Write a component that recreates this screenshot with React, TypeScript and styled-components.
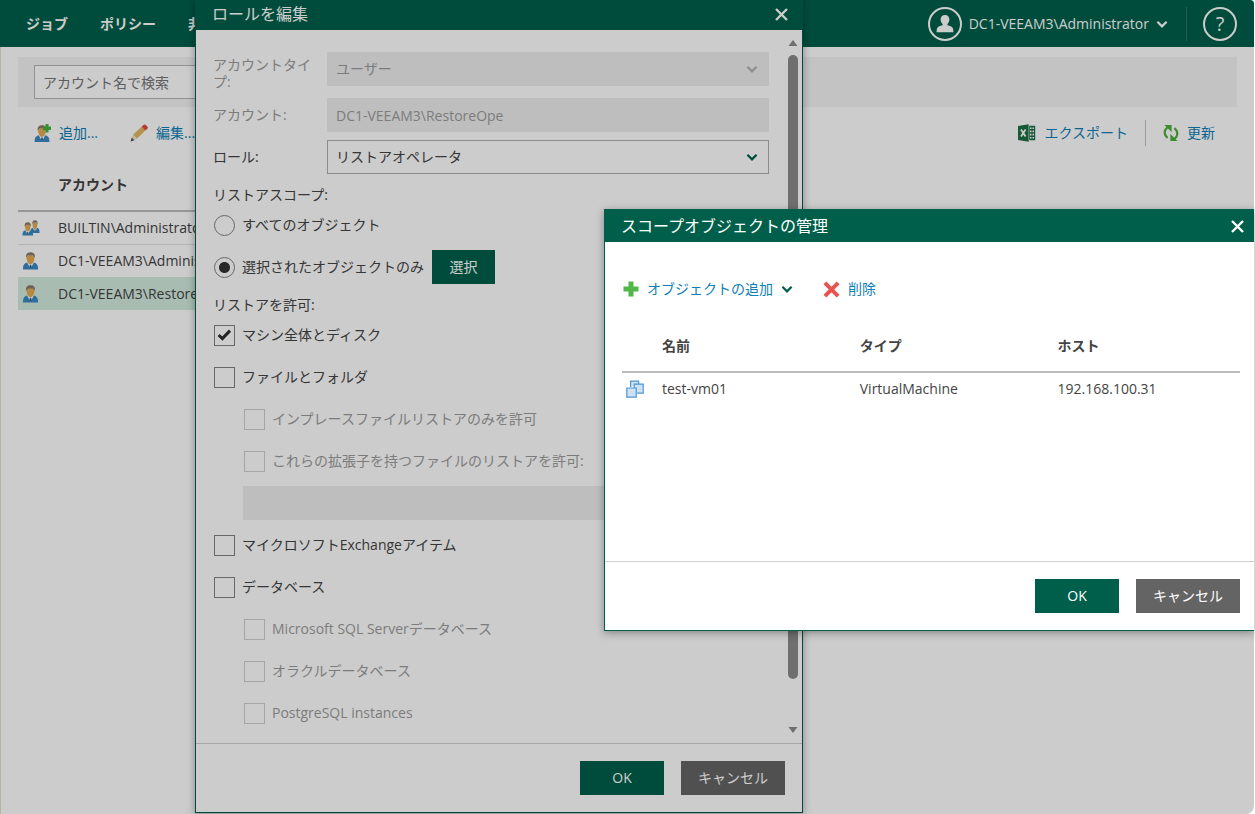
import React, { useState } from "react";
import styled, { createGlobalStyle, css } from "styled-components";

const fontStack = `"Open Sans", "Noto Sans CJK JP", sans-serif`;
const brand = "#005f4b";
const link = "#0f7fb5";
const ink = "#444444";
const faded = "#9c9c9c";

const GlobalStyle = createGlobalStyle`
  * { box-sizing: border-box; }
  html, body, #root { height: 100%; }
  body { margin: 0; background: #fff; overflow: hidden; }
  body, button, input, select, table { font-family: ${fontStack}; font-size: 14px; line-height: 20px; color: ${ink}; }
  button { border: 0; background: none; padding: 0; cursor: pointer; white-space: nowrap; }
  svg { display: block; flex: none; }
`;

/* ---------- page ---------- */

const Screen = styled.div`
  position: relative;
  height: 100%;
  min-height: 814px;
  overflow: hidden;
`;

const Page = styled.div`
  height: 100%;
  margin-right: 1px;
  border-radius: 0 4px 8px 0;
  overflow: hidden;
  background: #fff;
`;

const TopBar = styled.header`
  display: flex;
  align-items: center;
  justify-content: space-between;
  height: 47px;
  padding: 0 17px 0 26px;
  background: ${brand};
`;

const Nav = styled.nav`
  display: flex;
  gap: 32px;
`;

const NavLink = styled.a`
  color: #fff;
  font-weight: 700;
  line-height: 18px;
  text-decoration: none;
  white-space: nowrap;
`;

const Account = styled.div`
  display: flex;
  align-items: center;
`;

const AccountButton = styled.button`
  display: flex;
  align-items: center;
  gap: 7px;
  color: #fff;
`;

const RoundIcon = styled.span`
  display: flex;
  align-items: center;
  justify-content: center;
  width: 34px;
  height: 34px;
  border: 2px solid #fff;
  border-radius: 50%;
`;

const HelpButton = styled.button`
  width: 34px;
  height: 34px;
  margin-left: 16px;
  border: 2px solid #fff;
  border-radius: 50%;
  color: #fff;
  font-size: 20px;
`;

const BarRule = styled.span`
  width: 1px;
  height: 34px;
  margin-left: 18px;
  background: #2b7967;
`;

const Main = styled.main`
  height: 100%;
  padding: 10px 17px 0;
  border-left: 1px solid #e8e0cc;
`;

const SearchBand = styled.div`
  display: flex;
  padding: 8px 16px;
  background: #f4f4f4;
`;

const SearchInput = styled.input`
  width: 280px;
  height: 34px;
  padding: 0 8px;
  border: 1px solid #b8b8b8;
  background: #fff;
  &::placeholder { color: #757575; opacity: 1; }
`;

const Toolbar = styled.div`
  display: flex;
  align-items: center;
  justify-content: space-between;
  height: 51px;
  padding: 0 22px 0 16px;
`;

const ToolGroup = styled.div<{ $gap: number }>`
  display: flex;
  align-items: center;
  gap: ${(p) => p.$gap}px;
`;

const ToolButton = styled.button`
  display: flex;
  align-items: center;
  gap: 8px;
  color: ${link};
`;

const ToolRule = styled.span`
  width: 1px;
  height: 26px;
  background: #c4c4c4;
`;

const Grid = styled.table`
  width: 100%;
  border-collapse: collapse;
  table-layout: fixed;
`;

const HeadCell = styled.th<{ $width?: string }>`
  width: ${(p) => p.$width ?? "auto"};
  height: 53px;
  padding: 2px 0 0;
  border-bottom: 2px solid #bdbdbd;
  font-weight: 700;
  text-align: left;
`;

const BodyRow = styled.tr<{ $selected?: boolean; $line?: boolean }>`
  background: ${(p) => (p.$selected ? "#d3ebdf" : "transparent")};
  border-bottom: ${(p) => (p.$line ? "1px solid #e2e2e2" : "0")};
`;

const Cell = styled.td`
  height: 33px;
  padding: 0;
  white-space: nowrap;
`;

const IconCell = styled(Cell)`
  padding-left: 4px;
`;

/* ---------- dialogs ---------- */

const Shade = styled.div`
  position: absolute;
  inset: 0 1px 0 0;
  border-radius: 0 4px 8px 0;
  background: rgba(0, 0, 0, 0.2);
`;

const Dialog = styled.section`
  position: absolute;
  display: flex;
  flex-direction: column;
  border: 1px solid ${brand};
  background: #fff;
  box-shadow: 0 2px 8px rgba(0, 0, 0, 0.35);
`;

const RoleDialog = styled(Dialog)`
  top: -3px;
  left: 195px;
  width: 608px;
`;

const ScopeDialog = styled(Dialog)`
  top: 209px;
  left: 604px;
  right: 1px;
  border-right: 0;
`;

const DialogHead = styled.header<{ $endPad: number }>`
  display: flex;
  align-items: center;
  justify-content: space-between;
  height: 32px;
  padding: 0 ${(p) => p.$endPad}px 0 16px;
  background: ${brand};
`;

const DialogTitle = styled.h2`
  margin: 0;
  color: #fff;
  font-size: 16px;
  font-weight: 400;
  line-height: 24px;
`;

const DialogFoot = styled.footer<{ $endPad: number }>`
  display: flex;
  justify-content: flex-end;
  gap: 17px;
  padding: 17px ${(p) => p.$endPad}px 17px 17px;
  border-top: 1px solid #cfcfcf;
`;

const ActionButton = styled.button<{ $tone?: "grey"; $width: number }>`
  width: ${(p) => p.$width}px;
  height: 34px;
  background: ${(p) => (p.$tone === "grey" ? "#646464" : brand)};
  color: #fff;
`;

const ScrollArea = styled.div`
  display: flex;
  justify-content: space-between;
`;

const Form = styled.form`
  display: flex;
  flex-direction: column;
  flex: 1;
  gap: 8px;
  padding: 22px 15px 13px 17px;
`;

const FieldSet = styled.div`
  display: grid;
  grid-template-columns: 100px 1fr;
  column-gap: 14px;
  row-gap: 8px;
  align-items: start;
`;

const fieldBox = css`
  width: 100%;
  height: 34px;
  padding: 0 8px;
  border: 1px solid #b0b0b0;
  border-radius: 0;
  background: #fff;
  color: ${ink};
  opacity: 1;
  &:disabled { border-color: #eeeeee; background: #eeeeee; color: ${faded}; }
`;

const FieldLabel = styled.label<{ $muted?: boolean; $twoLines?: boolean }>`
  padding-top: ${(p) => (p.$twoLines ? 4 : 8)}px;
  color: ${(p) => (p.$muted ? faded : ink)};
  line-height: 17px;
`;

const FieldInput = styled.input`
  ${fieldBox}
`;

const SelectWrap = styled.div`
  display: grid;
  align-items: center;
  & > * { grid-area: 1 / 1; }
  & > svg { justify-self: end; margin-right: 11px; pointer-events: none; }
`;

const FieldSelect = styled.select`
  ${fieldBox}
  appearance: none;
`;

const Group = styled.fieldset`
  display: flex;
  flex-direction: column;
  gap: 8px;
  min-width: 0;
  margin: 0;
  padding: 0;
  border: 0;
`;

const Legend = styled.legend`
  height: 26px;
  padding: 0;
  line-height: 26px;
`;

const OptionRow = styled.div<{ $nested?: boolean }>`
  display: flex;
  align-items: center;
  height: 34px;
  padding-left: ${(p) => (p.$nested ? 31 : 1)}px;
`;

const OptionLabel = styled.label<{ $muted?: boolean }>`
  display: flex;
  align-items: center;
  gap: 7px;
  margin-right: 8px;
  color: ${(p) => (p.$muted ? faded : ink)};
  white-space: nowrap;
`;

const markBox = css`
  appearance: none;
  flex: none;
  width: 21px;
  height: 21px;
  margin: 0;
  border: 1px solid #828282;
  background: #fff;
  &:disabled { border-color: #cecece; }
`;

const Radio = styled.input`
  ${markBox}
  border-radius: 50%;
  &:checked { background: radial-gradient(circle, #333 5px, #fff 6px); }
`;

const Tick = styled.input`
  ${markBox}
`;

const TickWrap = styled.span`
  display: grid;
  place-items: center;
  & > * { grid-area: 1 / 1; }
  & > svg { pointer-events: none; }
`;

const NestedField = styled.div`
  padding-left: 30px;
`;

const ScrollRail = styled.div`
  display: flex;
  flex-direction: column;
  align-items: center;
  width: 18px;
  padding: 10px 0;
`;

const ScrollThumb = styled.div`
  width: 10px;
  height: 624px;
  margin: 9px 0 auto;
  border-radius: 5px;
  background: #8b8b8b;
`;

const ScopeBody = styled.div`
  min-height: 319px;
  padding: 22px 14px 0 17px;
`;

const ScopeTools = styled.div`
  display: flex;
  align-items: center;
  gap: 30px;
  height: 50px;
  margin-bottom: 5px;
`;

/* ---------- icons ---------- */

const Chevron = ({ color }: { color: string }) => (
  <svg width="12" height="8" viewBox="0 0 12 8" fill="none" stroke={color} strokeWidth="2.2">
    <path d="M1.4 1.8 6 6.400l4.600-4.600" />
  </svg>
);

const Cross = () => (
  <svg width="13" height="13" viewBox="0 0 13 13" fill="none" stroke="#fff" strokeWidth="2.4">
    <path d="m1 1 11 11M12 1 1 12" />
  </svg>
);

const CheckMark = () => (
  <svg width="15" height="12" viewBox="0 0 15 12" fill="none" stroke="#2e2e2e" strokeWidth="3">
    <path d="M1.6 6 5.4 9.6 13 1.6" />
  </svg>
);

const Avatar = () => (
  <svg width="18" height="18" viewBox="0 0 18 18" fill="#fff">
    <path d="M9 0c2.700 0 4.400 1.900 4.400 4.400 0 1.800-.8 3.500-2 4.600v1.300c2.800.5 5.300 1.600 5.700 3.500l.4 3.400H.5l.4-3.400c.4-1.900 2.900-3 5.700-3.500V9c-1.200-1.100-2-2.800-2-4.600C4.600 1.900 6.300 0 9 0Z" />
  </svg>
);

const PersonShape = () => (
  <>
    <path d="M.6 17c0-4 1-6 4.400-6.700h6C14.400 11 15.400 13 15.400 17Z" fill="#3a8ac4" />
    <path d="m4.600 10 3.400 6.500 3.400-6.500Z" fill="#fff" />
    <path d="M7.300 12.400h1.400L9 15l-1 1.500L7 15Z" fill="#2c5f8c" />
    <path d="M4 4.500C4 8 5.500 12 8 12s4-4 4-7.500L8 2.500Z" fill="#e3ac55" />
    <path d="M3.600 5.600C3.300 1.900 5 .2 8 .2s4.700 1.700 4.400 5.400C11.600 3.800 10.300 3.300 8 3.300S4.400 3.800 3.600 5.600Z" fill="#8a7a6c" />
  </>
);

const UserIcon = () => (
  <svg width="17" height="18" viewBox="0 0 16 17.600"><PersonShape /></svg>
);

const UsersIcon = () => (
  <svg width="18" height="16" viewBox="0 0 18 16">
    <g transform="translate(8 0) scale(.62 .76)"><PersonShape /></g>
    <g transform="translate(0 2) scale(.72 .8)"><PersonShape /></g>
  </svg>
);

const AddUserIcon = () => (
  <svg width="17" height="18" viewBox="0 0 17 18">
    <g transform="translate(0 1)"><PersonShape /></g>
    <path d="M11.500 0h3v2.500H17v3.500h-2.500v2.500h-3V6H9V2.500h2.500Z" fill="#47b33b" />
  </svg>
);

const PencilIcon = () => (
  <svg width="18" height="18" viewBox="0 0 18 18">
    <path d="m3 10.800 8.600-8 3.800 3.800-8.600 8.200Z" fill="#e3b85f" />
    <path d="m11.600 2.800 1.900-1.900c.7-.7 1.500-.7 2.200 0l1.600 1.600c.7.7.7 1.500 0 2.200l-1.900 1.900Z" fill="#dd4b3a" />
    <path d="m3 10.800 3.800 4L.6 17.400Z" fill="#efe3cb" />
    <path d="m1.700 13.500 2.800 2.700-3.900 1.200Z" fill="#555" />
  </svg>
);

const ExcelIcon = () => (
  <svg width="18" height="18" viewBox="0 0 18 18">
    <path d="M0 2 10.600.3v17.400L0 16Z" fill="#1c7044" />
    <path d="m3 5.500 4.600 7M7.600 5.500 3 12.500" stroke="#fff" strokeWidth="1.800" />
    <path d="M11.200 1.700h6v14.600h-6Z" fill="#1c7044" />
    <path d="M12 4.200h1.500M14.500 4.200H16M12 7.400h1.500M14.500 7.400H16M12 10.600h1.500M14.500 10.600H16M12 13.800h1.500M14.500 13.800H16" stroke="#fff" strokeWidth="1.600" />
  </svg>
);

const RefreshIcon = () => (
  <svg width="16" height="18" viewBox="0 0 16 18">
    <path d="M4.600 13.800C.8 10.800.6 6.600 4.400 3.200M11.400 4.200c3.800 3 4 7.200.2 10.600" fill="none" stroke="#4fae3c" strokeWidth="2.200" />
    <path d="M1.400 1.100h7.200v6.800ZM14.600 16.900H7.400v-6.800Z" fill="#4fae3c" />
  </svg>
);

const PlusIcon = () => (
  <svg width="17" height="16" viewBox="0 0 17 16" fill="#4fb848">
    <path d="M6.500.5h5v5h5v5h-5v5h-5v-5h-5v-5h5Z" />
  </svg>
);

const DeleteIcon = () => (
  <svg width="17" height="17" viewBox="0 0 18 18" stroke="#e9534f" strokeWidth="4.200">
    <path d="m2 2 14 14M16 2 2 16" />
  </svg>
);

const MachineIcon = () => (
  <svg width="18" height="18" viewBox="0 0 18 18" fill="#cfe2f5" stroke="#4d97d1" strokeWidth="1.200">
    <path d="M4.600 7V1.100h8v3" />
    <path d="M8.200 8V4.200h9v9h-6" />
    <path d="M.8 8h9.400v9.200H.8Z" />
  </svg>
);

const ArrowUp = () => (
  <svg width="10" height="6" viewBox="0 0 9 6" fill="#8b8b8b"><path d="M0 6 4.500 0 9 6Z" /></svg>
);

const ArrowDown = () => (
  <svg width="10" height="6" viewBox="0 0 9 6" fill="#8b8b8b"><path d="M0 0 4.500 6 9 0Z" /></svg>
);

/* ---------- parts ---------- */

type OptionProps = {
  id: string;
  label: string;
  nested?: boolean;
  disabled?: boolean;
  initial?: boolean;
};

const CheckOption = ({ id, label, nested, disabled, initial = false }: OptionProps) => {
  const [on, setOn] = useState(initial);
  return (
    <OptionRow $nested={nested}>
      <OptionLabel htmlFor={id} $muted={disabled}>
        <TickWrap>
          <Tick type="checkbox" id={id} checked={on} disabled={disabled} onChange={() => setOn(!on)} />
          {on && <CheckMark />}
        </TickWrap>
        {label}
      </OptionLabel>
    </OptionRow>
  );
};

const accounts = [
  { name: "BUILTIN\\Administrators", group: true },
  { name: "DC1-VEEAM3\\Administrator", group: false },
  { name: "DC1-VEEAM3\\RestoreOpe", group: false },
];

export default function App() {
  const [scope, setScope] = useState("selected");

  return (
    <Screen>
      <GlobalStyle />
      <Page>
        <TopBar>
          <Nav>
            <NavLink href="#jobs">ジョブ</NavLink>
            <NavLink href="#policies">ポリシー</NavLink>
            <NavLink href="#unstructured">非</NavLink>
          </Nav>
          <Account>
            <AccountButton type="button">
              <RoundIcon><Avatar /></RoundIcon>
              DC1-VEEAM3\Administrator
              <Chevron color="#fff" />
            </AccountButton>
            <BarRule />
            <HelpButton type="button">?</HelpButton>
          </Account>
        </TopBar>
        <Main>
          <SearchBand>
            <SearchInput type="search" aria-label="アカウント名で検索" placeholder="アカウント名で検索" />
          </SearchBand>
          <Toolbar>
            <ToolGroup $gap={32}>
              <ToolButton type="button"><AddUserIcon />追加...</ToolButton>
              <ToolButton type="button"><PencilIcon />編集...</ToolButton>
            </ToolGroup>
            <ToolGroup $gap={17}>
              <ToolButton type="button"><ExcelIcon />エクスポート</ToolButton>
              <ToolRule />
              <ToolButton type="button"><RefreshIcon />更新</ToolButton>
            </ToolGroup>
          </Toolbar>
          <Grid>
            <thead>
              <tr>
                <HeadCell $width="40px" />
                <HeadCell>アカウント</HeadCell>
              </tr>
            </thead>
            <tbody>
              {accounts.map((a, i) => (
                <BodyRow key={a.name} $selected={i === 2} $line={i === 0}>
                  <IconCell>{a.group ? <UsersIcon /> : <UserIcon />}</IconCell>
                  <Cell>{a.name}</Cell>
                </BodyRow>
              ))}
            </tbody>
          </Grid>
        </Main>
      </Page>

      <RoleDialog role="dialog" aria-labelledby="role-title">
        <DialogHead $endPad={14}>
          <DialogTitle id="role-title">ロールを編集</DialogTitle>
          <button type="button" aria-label="閉じる"><Cross /></button>
        </DialogHead>
        <ScrollArea>
          <Form>
            <FieldSet>
              <FieldLabel htmlFor="account-type" $muted $twoLines>アカウントタイプ:</FieldLabel>
              <SelectWrap>
                <FieldSelect id="account-type" disabled>
                  <option>ユーザー</option>
                </FieldSelect>
                <Chevron color="#b4b4b4" />
              </SelectWrap>
              <FieldLabel htmlFor="account" $muted>アカウント:</FieldLabel>
              <FieldInput id="account" disabled defaultValue={"DC1-VEEAM3\\RestoreOpe"} />
              <FieldLabel htmlFor="role">ロール:</FieldLabel>
              <SelectWrap>
                <FieldSelect id="role">
                  <option>リストアオペレータ</option>
                </FieldSelect>
                <Chevron color={brand} />
              </SelectWrap>
            </FieldSet>
            <Group>
              <Legend>リストアスコープ:</Legend>
              <OptionRow>
                <OptionLabel>
                  <Radio type="radio" name="scope" checked={scope === "all"} onChange={() => setScope("all")} />
                  すべてのオブジェクト
                </OptionLabel>
              </OptionRow>
              <OptionRow>
                <OptionLabel>
                  <Radio type="radio" name="scope" checked={scope === "selected"} onChange={() => setScope("selected")} />
                  選択されたオブジェクトのみ
                </OptionLabel>
                <ActionButton type="button" $width={63}>選択</ActionButton>
              </OptionRow>
            </Group>
            <Group>
              <Legend>リストアを許可:</Legend>
              <CheckOption id="machines" label="マシン全体とディスク" initial />
              <CheckOption id="files" label="ファイルとフォルダ" />
              <CheckOption id="in-place" label="インプレースファイルリストアのみを許可" nested disabled />
              <CheckOption id="extensions" label="これらの拡張子を持つファイルのリストアを許可:" nested disabled />
              <NestedField>
                <FieldInput aria-label="拡張子" disabled />
              </NestedField>
              <CheckOption id="exchange" label="マイクロソフトExchangeアイテム" />
              <CheckOption id="databases" label="データベース" />
              <CheckOption id="mssql" label="Microsoft SQL Serverデータベース" nested disabled />
              <CheckOption id="oracle" label="オラクルデータベース" nested disabled />
              <CheckOption id="postgres" label="PostgreSQL instances" nested disabled />
            </Group>
          </Form>
          <ScrollRail>
            <ArrowUp />
            <ScrollThumb />
            <ArrowDown />
          </ScrollRail>
        </ScrollArea>
        <DialogFoot $endPad={17}>
          <ActionButton type="button" $width={84}>OK</ActionButton>
          <ActionButton type="button" $tone="grey" $width={104}>キャンセル</ActionButton>
        </DialogFoot>
      </RoleDialog>

      <Shade />

      <ScopeDialog role="dialog" aria-labelledby="scope-title">
        <DialogHead $endPad={10}>
          <DialogTitle id="scope-title">スコープオブジェクトの管理</DialogTitle>
          <button type="button" aria-label="閉じる"><Cross /></button>
        </DialogHead>
        <ScopeBody>
          <ScopeTools>
            <ToolButton type="button"><PlusIcon />オブジェクトの追加<Chevron color={brand} /></ToolButton>
            <ToolButton type="button"><DeleteIcon />削除</ToolButton>
          </ScopeTools>
          <Grid>
            <thead>
              <tr>
                <HeadCell $width="40px" />
                <HeadCell $width="32%">名前</HeadCell>
                <HeadCell $width="32%">タイプ</HeadCell>
                <HeadCell>ホスト</HeadCell>
              </tr>
            </thead>
            <tbody>
              <BodyRow>
                <IconCell><MachineIcon /></IconCell>
                <Cell>test-vm01</Cell>
                <Cell>VirtualMachine</Cell>
                <Cell>192.168.100.31</Cell>
              </BodyRow>
            </tbody>
          </Grid>
        </ScopeBody>
        <DialogFoot $endPad={14}>
          <ActionButton type="button" $width={84}>OK</ActionButton>
          <ActionButton type="button" $tone="grey" $width={104}>キャンセル</ActionButton>
        </DialogFoot>
      </ScopeDialog>
    </Screen>
  );
}
